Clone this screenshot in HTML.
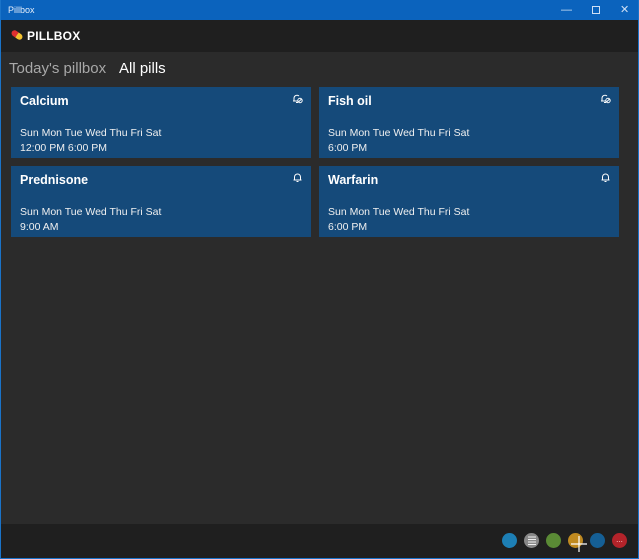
<!DOCTYPE html>
<html><head><meta charset="utf-8"><style>
*{margin:0;padding:0;box-sizing:border-box}
body{width:639px;height:559px;overflow:hidden;background:#2b2b2b;font-family:"Liberation Sans",sans-serif;color:#fff;position:relative}
.frame{position:absolute;left:0;top:0;width:639px;height:559px;border:1px solid #1a73c8;border-top:none;pointer-events:none;z-index:5}
.title{position:absolute;left:0;top:0;width:639px;height:20px;background:#0b63bd;font-size:9px;line-height:20px;padding-left:8px;color:#e6eefa}
.tb{position:absolute;top:0;height:20px;color:#cfe0f5;font-size:11px;line-height:20px}
.hdr{position:absolute;left:0;top:20px;width:639px;height:32px;background:#1f1f1f}
.hdr b{position:absolute;left:27px;top:9px;font-size:12px;letter-spacing:.2px}
.tabs{position:absolute;top:60px;font-size:15px}
.card{position:absolute;width:300px;height:71px;background:#154a7a}
.card h3{position:absolute;left:9px;top:7px;font-size:12.5px}
.card p{position:absolute;left:9px;font-size:10.5px;color:#f0f0f0}
.bell{position:absolute;right:8px;top:6px}
.bot{position:absolute;left:0;top:524px;width:639px;height:35px;background:#1f1f1f}
.c{position:absolute;top:533px;width:15px;height:15px;border-radius:50%}
</style></head><body>
<div class="frame"></div>
<div class="title">Pillbox</div>
<div class="tb" style="left:561px">&#8212;</div>
<div class="tb" style="left:592px;top:6px;width:8px;height:8px;border:1px solid #cfe0f5"></div>
<div class="tb" style="left:620px">&#10005;</div>
<div class="hdr"><svg style="position:absolute;left:10px;top:9px" width="14" height="12" viewBox="0 0 14 12"><g transform="rotate(35 7 6)"><rect x="1" y="3" width="6" height="6" rx="3" fill="#e03030"/><rect x="4" y="3" width="3" height="6" fill="#e03030"/><rect x="7" y="3" width="6" height="6" rx="3" fill="#f3c230"/><rect x="7" y="3" width="3" height="6" fill="#f3c230"/></g></svg><b>PILLBOX</b></div>
<div class="tabs" style="left:9px;color:#a8a8a8">Today's pillbox</div>
<div class="tabs" style="left:119px;color:#fff">All pills</div>

<div class="card" style="left:11px;top:87px"><h3>Calcium</h3><svg class="bell" width="11" height="11" viewBox="0 0 11 11" fill="none" stroke="#fff" stroke-width="1"><path d="M2 8V5a3 3 0 0 1 5-2M1 8h5M4 9.5h2"/><circle cx="8" cy="7.5" r="2.2"/><path d="M6.5 9l3-3"/></svg><p style="top:40px">Sun Mon Tue Wed Thu Fri Sat</p><p style="top:55px">12:00 PM 6:00 PM</p></div>
<div class="card" style="left:319px;top:87px"><h3>Fish oil</h3><svg class="bell" width="11" height="11" viewBox="0 0 11 11" fill="none" stroke="#fff" stroke-width="1"><path d="M2 8V5a3 3 0 0 1 5-2M1 8h5M4 9.5h2"/><circle cx="8" cy="7.5" r="2.2"/><path d="M6.5 9l3-3"/></svg><p style="top:40px">Sun Mon Tue Wed Thu Fri Sat</p><p style="top:55px">6:00 PM</p></div>
<div class="card" style="left:11px;top:166px"><h3>Prednisone</h3><svg class="bell" width="11" height="11" viewBox="0 0 11 11" fill="none" stroke="#fff" stroke-width="1"><path d="M2.5 8V5a3 3 0 0 1 6 0v3M1.5 8h8M4.5 9.5h2"/></svg><p style="top:40px">Sun Mon Tue Wed Thu Fri Sat</p><p style="top:55px">9:00 AM</p></div>
<div class="card" style="left:319px;top:166px"><h3>Warfarin</h3><svg class="bell" width="11" height="11" viewBox="0 0 11 11" fill="none" stroke="#fff" stroke-width="1"><path d="M2.5 8V5a3 3 0 0 1 6 0v3M1.5 8h8M4.5 9.5h2"/></svg><p style="top:40px">Sun Mon Tue Wed Thu Fri Sat</p><p style="top:55px">6:00 PM</p></div>

<div class="bot"></div>
<div class="c" style="left:502px;background:#1d7fb5"></div>
<div class="c" style="left:524px;background:#888"><svg width="15" height="15" viewBox="0 0 15 15" stroke="#eee" stroke-width="1"><path d="M4 4h8M4 6.5h8M4 9h8M4 11.5h8"/></svg></div>
<div class="c" style="left:546px;background:#5a8a35"></div>
<div class="c" style="left:568px;background:#c08a20"><svg width="22" height="22" viewBox="0 0 22 22" style="position:absolute;left:0;top:0" stroke="#fff" stroke-width="1.2"><path d="M3 11h16M11 3v16"/></svg></div>
<div class="c" style="left:590px;background:#155f95"></div>
<div class="c" style="left:612px;background:#b3232a;font-size:8px;line-height:13px;text-align:center;color:#fcc">...</div>
</body></html>
